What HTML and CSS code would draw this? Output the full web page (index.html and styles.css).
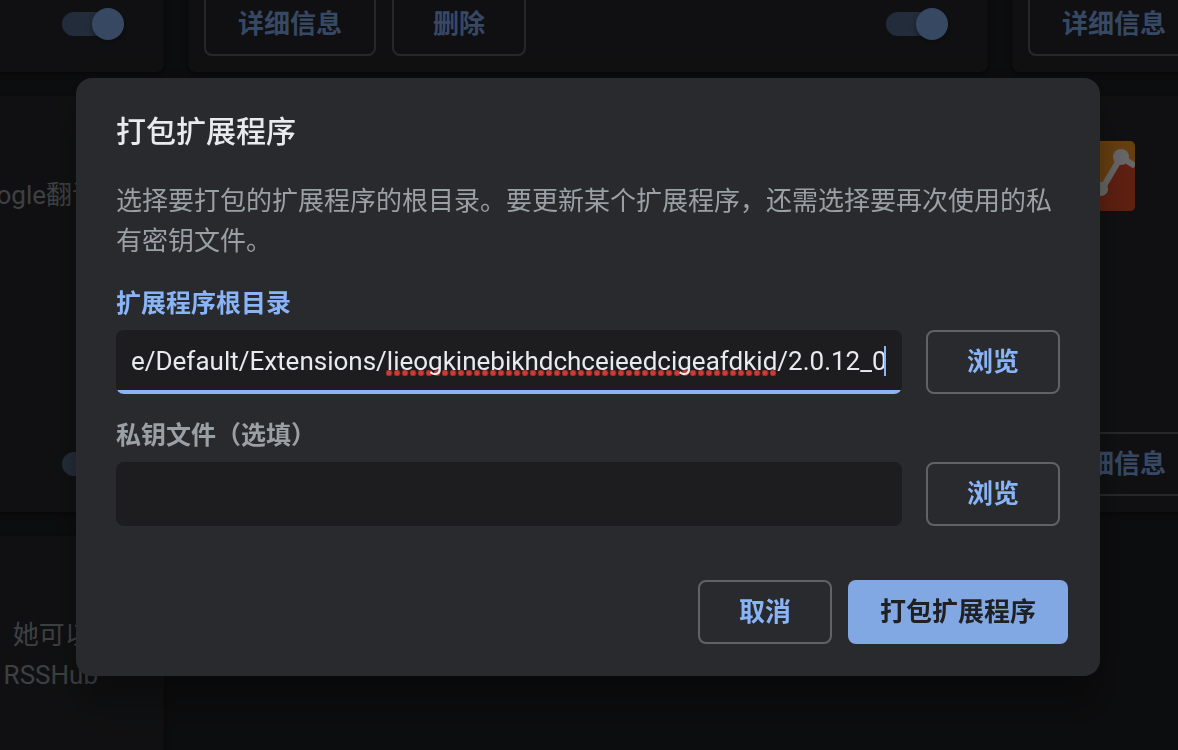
FILE: index.html
```html
<!DOCTYPE html>
<html lang="zh-CN">
<head>
    <meta charset="UTF-8">
    <meta name="viewport" content="width=device-width, initial-scale=1.0">
    <title>扩展程序</title>
    <link rel="stylesheet" href="styles.css">
</head>
<body>
    <main class="page">
        <div class="cards">
            <section class="card">
                <div class="card-footer">
                    <input type="checkbox" class="toggle" aria-label="启用" checked>
                </div>
            </section>
            <section class="card">
                <div class="card-footer">
                    <button type="button" class="btn">详细信息</button>
                    <button type="button" class="btn">删除</button>
                    <input type="checkbox" class="toggle" aria-label="启用" checked>
                </div>
            </section>
            <section class="card">
                <div class="card-footer">
                    <button type="button" class="btn">详细信息</button>
                </div>
            </section>

            <section class="card">
                <p class="card-desc">Google翻译</p>
                <div class="card-footer">
                    <input type="checkbox" class="toggle" aria-label="启用" checked>
                </div>
            </section>
            <section class="card"></section>
            <section class="card">
                <svg class="card-icon" viewBox="0 0 70 70" aria-hidden="true">
                    <rect width="70" height="70" rx="5" fill="#ff9c28"/>
                    <path d="M0 58 L37 48 L56 16 L70 25 V65 Q70 70 65 70 H5 Q0 70 0 65 Z" fill="#e8502c"/>
                    <path d="M0 30 L14 24 L37 48 L56 16 L70 25" fill="none" stroke="#fff" stroke-width="6"/>
                    <circle cx="36" cy="48" r="7" fill="#fff"/>
                    <circle cx="56" cy="16" r="8" fill="#fff"/>
                </svg>
                <div class="card-footer">
                    <button type="button" class="btn">详细信息</button>
                </div>
            </section>

            <section class="card">
                <p class="card-desc">她可以-<br>RSSHub</p>
            </section>
        </div>
    </main>

    <div class="backdrop">
        <form class="dialog" role="dialog" aria-labelledby="dialog-title">
            <h1 id="dialog-title">打包扩展程序</h1>
            <p class="intro">选择要打包的扩展程序的根目录。要更新某个扩展程序，还需选择要再次使用的私有密钥文件。</p>

            <div class="field active">
                <label for="root-dir">扩展程序根目录</label>
                <div class="field-row">
                    <div class="input-wrap">
                        <span class="spelling"></span>
                        <input type="text" id="root-dir" spellcheck="false" value="e/Default/Extensions/lieogkinebikhdchceieedcigeafdkid/2.0.12_0">
                        <span class="caret"></span>
                    </div>
                    <button type="button" class="btn">浏览</button>
                </div>
            </div>

            <div class="field">
                <label for="key-file">私钥文件（选填）</label>
                <div class="field-row">
                    <div class="input-wrap">
                        <input type="text" id="key-file">
                    </div>
                    <button type="button" class="btn">浏览</button>
                </div>
            </div>

            <div class="dialog-footer">
                <button type="button" class="btn">取消</button>
                <button type="submit" class="btn btn-primary">打包扩展程序</button>
            </div>
        </form>
    </div>
</body>
</html>
```
FILE: styles.css
```css
* {
    box-sizing: border-box;
}

body {
    margin: 0;
    background: #202124;
    color: #e8eaed;
    font-family: Roboto, "Noto Sans CJK SC", sans-serif;
    font-size: 26px;
    line-height: 40px;
    overflow: hidden;
}

/* extension list, scrolled behind the dialog */
.page {
    height: 100vh;
    overflow: hidden;
    padding-right: 2px;
}

.cards {
    display: grid;
    grid-template-columns: repeat(3, 800px);
    grid-auto-rows: 416px;
    gap: 24px;
    justify-content: center;
    margin-top: -344px;
}

.card {
    display: flex;
    flex-direction: column;
    padding: 45px 16px 16px;
    background: #292a2d;
    border-radius: 8px;
    box-shadow: 0 2px 4px rgba(0, 0, 0, 0.3), 0 2px 6px rgba(0, 0, 0, 0.15);
}

.card-desc {
    margin: 34px 50px 0 0;
    color: #9aa0a6;
    text-align: right;
}

.card-icon {
    width: 70px;
    height: 70px;
    margin-left: 37px;
}

.card-footer {
    display: flex;
    align-items: center;
    gap: 16px;
    height: 64px;
    margin-top: auto;
}

.toggle {
    appearance: none;
    position: relative;
    width: 62px;
    height: 32px;
    margin: 0 24px 0 auto;
}

.toggle::before {
    content: "";
    position: absolute;
    top: 4px;
    left: 0;
    width: 56px;
    height: 24px;
    border-radius: 12px;
    background: #8ab4f8;
    opacity: 0.5;
}

.toggle::after {
    content: "";
    position: absolute;
    top: 0;
    right: 0;
    width: 32px;
    height: 32px;
    border-radius: 50%;
    background: #8ab4f8;
    box-shadow: 0 2px 6px rgba(0, 0, 0, 0.4);
}

.btn {
    min-width: 134px;
    height: 64px;
    padding: 0 32px;
    border: 2px solid #5f6368;
    border-radius: 8px;
    background: transparent;
    color: #8ab4f8;
    font-family: inherit;
    font-size: 26px;
    font-weight: 700;
    line-height: 40px;
    white-space: nowrap;
}

.btn-primary {
    border: 0;
    background: #81a8e3;
    color: #202124;
}

.backdrop {
    position: fixed;
    inset: 0;
    padding: 78px 78px 0 76px;
    background: rgba(0, 0, 0, 0.6);
}

.dialog {
    padding: 33px 40px 32px;
    background: #292a2d;
    border-radius: 16px;
    box-shadow: 0 0 32px rgba(0, 0, 0, 0.12), 0 32px 32px rgba(0, 0, 0, 0.24);
}

.dialog h1 {
    margin: 0 0 28px;
    font-size: 30px;
    font-weight: 500;
    line-height: 42px;
}

.intro {
    margin: 0 0 28px;
    color: #9aa0a6;
}

.field {
    margin-bottom: 27px;
}

.field label {
    display: block;
    margin-bottom: 11px;
    color: #9aa0a6;
    font-size: 25px;
    font-weight: 700;
    line-height: 30px;
}

.field-row {
    display: flex;
    gap: 24px;
}

.input-wrap {
    position: relative;
    flex: 1;
    border-radius: 8px;
    background: #1d1d1f;
}

.input-wrap input {
    display: block;
    position: relative;
    width: 100%;
    height: 64px;
    padding: 0 15px 2px;
    border: 0;
    border-radius: 8px;
    outline: none;
    background: transparent;
    color: #e8eaed;
    font-family: inherit;
    font-size: 26px;
}

.active label {
    color: #8ab4f8;
}

.active input {
    background: linear-gradient(#8ab4f8, #8ab4f8) bottom / 100% 4px no-repeat;
}

/* spelling marks under the extension id */
.spelling {
    position: absolute;
    left: 270px;
    top: 40px;
    width: 390px;
    height: 6px;
    background: radial-gradient(circle at 3px 3px, #d03a34 2px, transparent 4px) 0 0 / 8px 6px;
}

.caret {
    position: absolute;
    right: 16px;
    top: 16px;
    width: 2px;
    height: 30px;
    background: #8ab4f8;
}

.dialog-footer {
    display: flex;
    justify-content: flex-end;
    gap: 16px;
    margin: 54px -8px 0 0;
}
```
